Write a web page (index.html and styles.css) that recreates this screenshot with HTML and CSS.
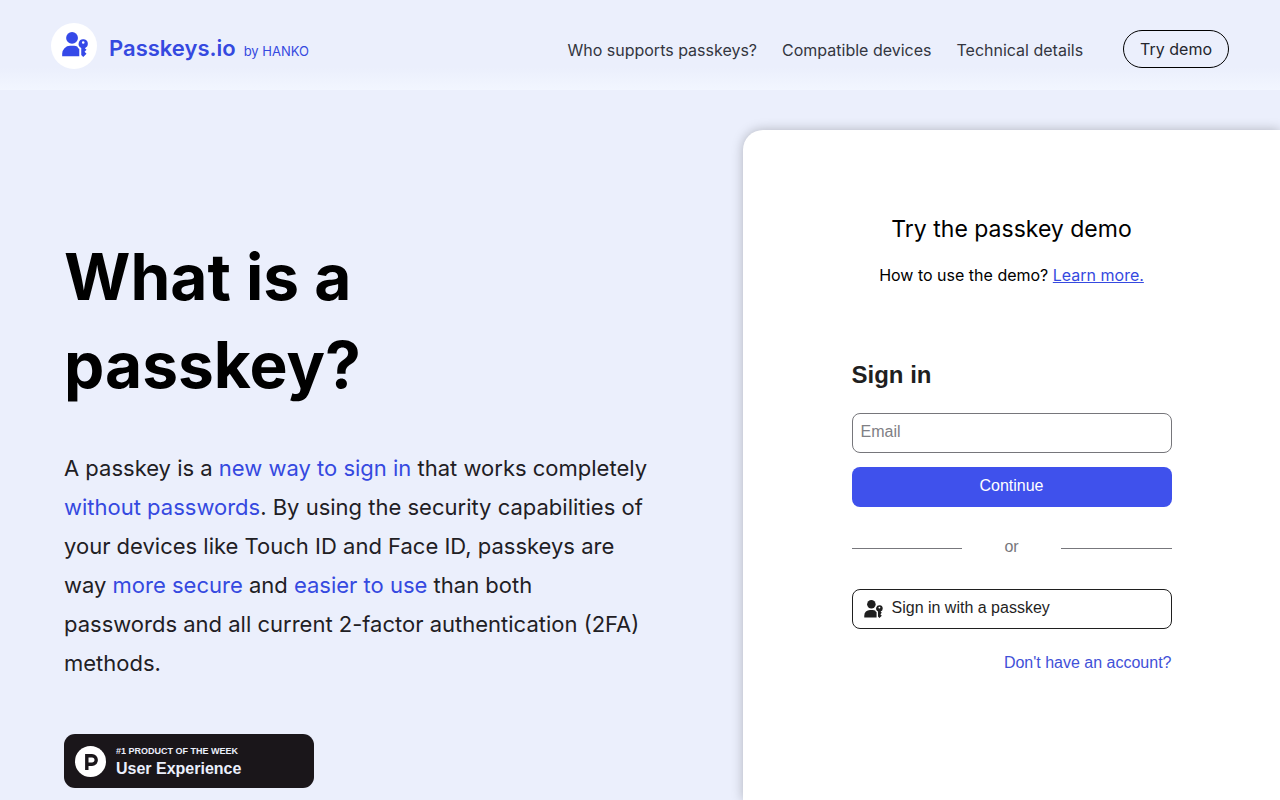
FILE: index.html
```html
<!DOCTYPE html>
<html lang="en">
<head>
<meta charset="utf-8">
<meta name="viewport" content="width=device-width, initial-scale=1">
<title>Passkeys.io</title>
<link rel="stylesheet" href="styles.css">
</head>
<body>
<svg class="defs" aria-hidden="true">
  <symbol id="passkey" viewBox="3 1.5 19.5 19">
    <circle cx="10.5" cy="6" r="4.5"/>
    <path d="M22.5,10.5a3.5,3.5,0,1,0-5,3.15V19L19,20.5,21.5,18,20,16.5,21.5,15l-1.24-1.24A3.5,3.5,0,0,0,22.5,10.5Zm-3.5,0a1,1,0,1,1,1-1A1,1,0,0,1,19,10.5Z"/>
    <path d="M14.44,12.52A6,6,0,0,0,12,12H9a6,6,0,0,0-6,6v2H16V14.49A5.16,5.16,0,0,1,14.44,12.52Z"/>
  </symbol>
</svg>
<header class="header">
  <a class="brand" href="#">
    <span class="brand-mark"><svg class="brand-icon" aria-hidden="true"><use href="#passkey"/></svg></span>
    <span class="brand-text"><span class="brand-name">Passkeys.io</span><span class="brand-by">by HANKO</span></span>
  </a>
  <nav class="nav">
    <a class="nav-link" href="#">Who supports passkeys?</a>
    <a class="nav-link" href="#">Compatible devices</a>
    <a class="nav-link" href="#">Technical details</a>
    <button class="try" type="button">Try demo</button>
  </nav>
</header>
<main class="main">
  <section class="intro">
    <h1 class="title">What is a<br>passkey?</h1>
    <p class="lead">A passkey is a <em class="hl">new way to sign in</em> that works completely <em class="hl">without passwords</em>. By using the security capabilities of your devices like Touch ID and Face ID, passkeys are way <em class="hl">more secure</em> and <em class="hl">easier to use</em> than both passwords and all current 2-factor authentication (2FA) methods.</p>
    <a class="award" href="#">
      <svg class="award-icon" viewBox="0 0 31 31" aria-hidden="true"><circle cx="15.5" cy="15.5" r="15.5" fill="#fff"/><path d="M11.8 24V9.8H17a4.2 4.2 0 0 1 0 8.4h-5.2" fill="none" stroke="#1a161a" stroke-width="3.4"/></svg>
      <span class="award-text"><span class="award-top">#1 PRODUCT OF THE WEEK</span><span class="award-name">User Experience</span></span>
    </a>
  </section>
  <section class="card">
    <h2 class="card-title">Try the passkey demo</h2>
    <p class="card-help">How to use the demo? <a class="learn" href="#">Learn more.</a></p>
    <form class="form">
      <h3 class="form-title">Sign in</h3>
      <input class="email" type="email" placeholder="Email" aria-label="Email">
      <button class="continue" type="button">Continue</button>
      <div class="divider"><span class="line"></span><span class="or">or</span><span class="line"></span></div>
      <button class="passkey" type="button"><svg class="passkey-icon" aria-hidden="true"><use href="#passkey"/></svg>Sign in with a passkey</button>
      <a class="signup" href="#">Don't have an account?</a>
    </form>
  </section>
</main>
</body>
</html>
```
FILE: styles.css
```css
* { box-sizing: border-box; }
body {
  margin: 0;
  min-height: 100vh;
  display: flex;
  flex-direction: column;
  overflow: hidden;
  background: #ebeffc;
  color: #1f2024;
  font-family: Inter, sans-serif;
  font-size: 16px;
}
h1, h2, h3, p { margin: 0; }
a { color: inherit; text-decoration: none; }
button, input { font: inherit; }
.defs { position: absolute; width: 0; height: 0; }
.header {
  display: flex;
  justify-content: space-between;
  align-items: flex-start;
  height: 90px;
  padding: 23px 51px 0;
  background: linear-gradient(#ebeffc 75%, #f2f6ff);
}
.brand { display: flex; gap: 12px; color: #3549e0; }
.brand-mark {
  display: grid;
  justify-items: center;
  padding-top: 9px;
  width: 46px;
  height: 46px;
  border-radius: 50%;
  background: #fff;
}
.brand-icon { width: 26px; height: 25px; margin-left: 2px; fill: #3549e8; }
.brand-text { display: flex; align-items: baseline; gap: 8px; padding-top: 11px; }
.brand-name { font-size: 22px; line-height: 28px; font-weight: 600; }
.brand-by { font-size: 13px; }
.nav { display: flex; align-items: center; gap: 25px; padding-top: 7px; color: #333640; }
.nav-link { line-height: 24px; padding-top: 2px; }
.try {
  margin-left: 15px;
  height: 38px;
  padding: 0 16px;
  border: 1px solid #000;
  border-radius: 19px;
  background: transparent;
  color: #24262d;
}
.main { flex: 1; display: grid; grid-template-columns: 743fr 537fr; }
.intro { padding: 143px 94px 12px 64px; }
.title { color: #000; font-size: 64px; line-height: 88px; font-weight: 700; }
.lead { margin-top: 40px; font-size: 22px; line-height: 39px; }
.hl { color: #3549e0; font-style: normal; }
.award {
  display: flex;
  align-items: center;
  gap: 10px;
  width: 250px;
  height: 54px;
  margin-top: 51px;
  padding: 0 11px;
  border-radius: 11px;
  background: #1a161a;
  color: #ebeffc;
  font-family: "Liberation Sans", Arial, sans-serif;
  font-weight: 700;
}
.award-icon { width: 31px; height: 31px; }
.award-text { display: flex; flex-direction: column; }
.award-top { font-size: 9px; line-height: 14px; }
.award-name { font-size: 16px; line-height: 21px; }
.card {
  display: flex;
  flex-direction: column;
  align-items: center;
  margin-top: 40px;
  padding: 84px 24px 0;
  border-radius: 20px 0 0 0;
  background: #fff;
  box-shadow: 0 0 12px rgba(0, 0, 0, 0.25);
}
.card-title { color: #000; font-size: 23px; line-height: 30px; font-weight: 400; }
.card-help { margin-top: 19px; color: #000; line-height: 24px; }
.learn { color: #3549e0; text-decoration: underline; }
.form {
  display: flex;
  flex-direction: column;
  width: 100%;
  max-width: 320px;
  margin-top: 72px;
  color: #1f1f1f;
  font-family: "Liberation Sans", Arial, sans-serif;
}
.form-title { font-size: 24px; line-height: 32px; }
.email {
  width: 100%;
  height: 40px;
  margin-top: 22px;
  padding: 0 8px 3px;
  border: 1px solid #76767b;
  border-radius: 8px;
  background: #fff;
}
.email::placeholder { color: #808085; opacity: 1; }
.continue {
  height: 40px;
  margin-top: 14px;
  padding: 0 8px 3px;
  border: 0;
  border-radius: 8px;
  background: #3f51ec;
  color: #fff;
}
.divider { display: flex; align-items: center; margin-top: 30px; color: #77777c; line-height: 20px; }
.line { flex: 1; height: 1px; margin-top: 3px; background: #77777c; }
.or { width: 99px; text-align: center; }
.passkey {
  display: flex;
  align-items: center;
  gap: 9px;
  height: 40px;
  margin-top: 32px;
  padding: 0 11px 3px;
  border: 1px solid #1f1f1f;
  border-radius: 8px;
  background: #fff;
  color: #1f1f1f;
}
.passkey-icon { width: 19px; height: 18px; margin-top: 3px; fill: #1f1f1f; }
.signup { align-self: flex-end; margin-top: 24px; color: #3f51d8; line-height: 20px; }
```
